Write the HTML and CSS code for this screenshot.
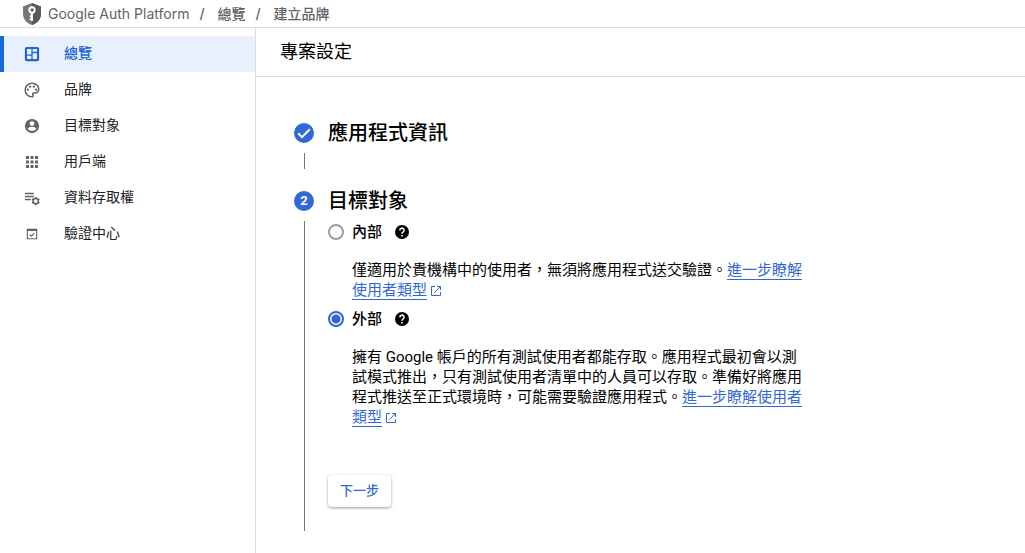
FILE: index.html
```html
<!DOCTYPE html>
<html lang="zh-Hant">
<head>
<meta charset="utf-8">
<meta name="viewport" content="width=device-width, initial-scale=1">
<title>專案設定</title>
<link rel="stylesheet" href="styles.css">
</head>
<body>
<header class="topbar">
  <svg class="shield" viewBox="0 0 20 24" aria-hidden="true">
    <path fill="#757575" d="M10 1 1 4.500v7C1 17 4.800 21.500 10 23c5.200-1.500 9-6 9-11.500v-7z"/>
    <path fill="#5a5a5a" d="M10 1v22c5.200-1.500 9-6 9-11.500v-7z"/>
    <circle cx="10" cy="8" r="2.700" fill="none" stroke="#fff" stroke-width="1.900"/>
    <path d="M10 10.500V19M10 14.200H7.800M10 17.200H7.800" fill="none" stroke="#fff" stroke-width="1.900"/>
  </svg>
  <nav class="crumbs" aria-label="導覽路徑">
    <a class="crumb product" href="#platform">Google Auth Platform</a>
    <span class="sep">/</span>
    <a class="crumb" href="#overview">總覽</a>
    <span class="sep">/</span>
    <a class="crumb" href="#brand">建立品牌</a>
  </nav>
</header>
<div class="shell">
  <nav class="sidebar" aria-label="主選單">
    <a class="nav-item active" href="#overview">
      <svg class="nav-icon" viewBox="0 0 24 24" aria-hidden="true"><path fill-rule="evenodd" d="M5 2.500h14A2.500 2.500 0 0 1 21.500 5v14a2.500 2.500 0 0 1-2.500 2.500H5A2.500 2.500 0 0 1 2.500 19V5A2.500 2.500 0 0 1 5 2.500zM5.300 5.300v13.400h13.400V5.300z"/><path fill="none" stroke="currentColor" stroke-width="1.700" d="M12 5v14M5 13.500h7M12 10h7"/></svg>
      <span class="nav-text">總覽</span></a>
    <a class="nav-item" href="#branding">
      <svg class="nav-icon" viewBox="0 0 24 24" aria-hidden="true"><path d="M12 22C6.490 22 2 17.510 2 12S6.490 2 12 2s10 4.040 10 9c0 3.310-2.690 6-6 6h-1.770c-.28 0-.5.220-.5.500 0 .120.050.230.130.330.410.470.640 1.060.640 1.670A2.500 2.500 0 0 1 12 22zm0-18c-4.410 0-8 3.590-8 8s3.590 8 8 8c.28 0 .5-.22.5-.5a.54.54 0 0 0-.14-.35c-.41-.46-.63-1.050-.63-1.650a2.500 2.500 0 0 1 2.500-2.500H16c2.210 0 4-1.790 4-4 0-3.860-3.590-7-8-7z"/><circle cx="6.500" cy="11.500" r="1.500"/><circle cx="9.500" cy="7.500" r="1.500"/><circle cx="14.500" cy="7.500" r="1.500"/><circle cx="17.500" cy="11.500" r="1.500"/></svg>
      <span class="nav-text">品牌</span></a>
    <a class="nav-item" href="#audience">
      <svg class="nav-icon" viewBox="0 0 24 24" aria-hidden="true"><path d="M12 2.500a9.500 9.500 0 1 0 0 19 9.500 9.500 0 0 0 0-19zm0 3a3.200 3.200 0 1 1 0 6.400 3.200 3.200 0 0 1 0-6.400zm0 13.300a6.800 6.800 0 0 1-5.700-3c0-1.900 3.800-2.900 5.700-2.900s5.700 1 5.700 2.900a6.800 6.800 0 0 1-5.700 3z"/></svg>
      <span class="nav-text">目標對象</span></a>
    <a class="nav-item" href="#clients">
      <svg class="nav-icon" viewBox="0 0 24 24" aria-hidden="true"><path d="M4 4h4v4H4zM10 4h4v4h-4zM16 4h4v4h-4zM4 10h4v4H4zM10 10h4v4h-4zM16 10h4v4h-4zM4 16h4v4H4zM10 16h4v4h-4zM16 16h4v4h-4z"/></svg>
      <span class="nav-text">用戶端</span></a>
    <a class="nav-item" href="#data">
      <svg class="nav-icon" viewBox="0 0 24 24" aria-hidden="true"><path d="M2.500 5h12v2h-12zM2.500 9h12v2h-12zM2.500 13h8v2h-8z"/><circle cx="17" cy="16" r="3.500" fill="none" stroke="currentColor" stroke-width="2"/><path d="M15.800 10.500h2.400v2h-2.400zM15.800 19.500h2.400v2h-2.400zM11.600 14.300l1.200-2.100 1.800 1-1.200 2.100zM19.400 18.800l1.200-2.100 1.800 1-1.200 2.100zM11.600 17.700l1.800-1 1.200 2.100-1.800 1zM19.400 13.200l1.800-1 1.200 2.100-1.800 1z"/></svg>
      <span class="nav-text">資料存取權</span></a>
    <a class="nav-item" href="#verification">
      <svg class="nav-icon" viewBox="0 0 24 24" aria-hidden="true"><path fill-rule="evenodd" d="M6 5h12a1 1 0 0 1 1 1v12a1 1 0 0 1-1 1H6a1 1 0 0 1-1-1V6a1 1 0 0 1 1-1zM6.500 8v9.500h11V8z"/><path d="m9 12.700 2.200 2.100 4-4" fill="none" stroke="currentColor" stroke-width="1.500"/></svg>
      <span class="nav-text">驗證中心</span></a>
  </nav>
  <main class="main">
    <h1 class="page-title">專案設定</h1>
    <ol class="steps">
      <li class="step">
        <div class="rail">
          <svg class="badge" viewBox="0 0 20 20" aria-hidden="true"><circle cx="10" cy="10" r="10" fill="#3367d6"/><path d="m4.200 10.300 3.800 3.800 7.800-7.800" fill="none" stroke="#fff" stroke-width="2"/></svg>
          <span class="line"></span>
        </div>
        <h2 class="step-title">應用程式資訊</h2>
      </li>
      <li class="step">
        <div class="rail">
          <span class="badge number">2</span>
          <span class="line"></span>
        </div>
        <form class="step-body">
          <h2 class="step-title">目標對象</h2>
          <div class="option">
            <input class="radio" type="radio" name="audience" id="internal">
            <label class="option-label" for="internal">內部</label>
            <button class="help" type="button" aria-label="說明"><svg class="help-icon" viewBox="0 0 14 14" aria-hidden="true"><circle cx="7" cy="7" r="7"/><path d="M4.900 5.500A2.100 2.100 0 1 1 8 7.100C7.300 7.600 7 7.900 7 8.700" fill="none" stroke="#fff" stroke-width="1.500"/><path fill="#fff" d="M6.200 9.900h1.600v1.500H6.200z"/></svg></button>
          </div>
          <p class="description">僅適用於貴機構中的使用者，無須將應用程式送交驗證。<a class="link" href="#user-type">進一步瞭解使用者類型</a><svg class="external" viewBox="0 0 12 12" aria-hidden="true"><path d="M5 1.500H1.500v9h9V7M7 1.500h3.500V5M10.500 1.500 4.500 7.500"/></svg></p>
          <div class="option">
            <input class="radio" type="radio" name="audience" id="external" checked>
            <label class="option-label" for="external">外部</label>
            <button class="help" type="button" aria-label="說明"><svg class="help-icon" viewBox="0 0 14 14" aria-hidden="true"><circle cx="7" cy="7" r="7"/><path d="M4.900 5.500A2.100 2.100 0 1 1 8 7.100C7.300 7.600 7 7.900 7 8.700" fill="none" stroke="#fff" stroke-width="1.500"/><path fill="#fff" d="M6.200 9.900h1.600v1.500H6.200z"/></svg></button>
          </div>
          <p class="description">擁有 Google 帳戶的所有測試使用者都能存取。應用程式最初會以測試模式推出，只有測試使用者清單中的人員可以存取。準備好將應用程式推送至正式環境時，可能需要驗證應用程式。<a class="link" href="#user-type">進一步瞭解使用者類型</a><svg class="external" viewBox="0 0 12 12" aria-hidden="true"><path d="M5 1.500H1.500v9h9V7M7 1.500h3.500V5M10.500 1.500 4.500 7.500"/></svg></p>
          <button class="next" type="button">下一步</button>
        </form>
      </li>
    </ol>
  </main>
</div>
</body>
</html>
```
FILE: styles.css
```css
* {
  box-sizing: border-box;
}

body {
  margin: 0;
  min-height: 100vh;
  display: flex;
  flex-direction: column;
  background: #fff;
  color: #000;
  font: 15px/20px Roboto, "Noto Sans CJK TC", sans-serif;
}

a {
  color: inherit;
  text-decoration: none;
}

.topbar {
  display: flex;
  align-items: center;
  gap: 6px;
  height: 28px;
  padding-left: 22px;
  border-bottom: 1px solid #dadce0;
}

.shield {
  width: 20px;
  height: 24px;
}

.crumbs {
  display: flex;
  gap: 10px;
  color: #5f6368;
  font-family: Inter, "Noto Sans CJK TC", sans-serif;
  font-size: 14px;
  font-weight: 500;
}

.product {
  font-weight: 400;
}

.sep {
  width: 8px;
}

.shell {
  flex: 1;
  display: flex;
}

.sidebar {
  flex: 0 0 256px;
  padding-top: 8px;
  border-right: 1px solid #dadce0;
}

.nav-item {
  display: flex;
  align-items: center;
  gap: 23px;
  height: 36px;
  padding-left: 19px;
  border-left: 4px solid transparent;
  color: #202124;
  font-size: 14px;
}

.nav-item.active {
  border-left-color: #1967d2;
  background: #e8f0fe;
  color: #1967d2;
  font-weight: 500;
}

.nav-text {
  padding-bottom: 2px;
}

.nav-icon {
  width: 18px;
  height: 18px;
  color: #5f6368;
  fill: currentColor;
}

.active .nav-icon {
  color: #1967d2;
}

.main {
  flex: 1;
  min-width: 0;
}

.page-title {
  margin: 0;
  padding: 12px 24px;
  border-bottom: 1px solid #dadce0;
  font-size: 18px;
  line-height: 24px;
  font-weight: 400;
}

.steps {
  margin: 0;
  padding: 46px 38px 22px;
  list-style: none;
}

.step {
  display: flex;
  gap: 14px;
  min-height: 68px;
}

.rail {
  flex: 0 0 20px;
  display: flex;
  flex-direction: column;
  align-items: center;
  gap: 10px;
}

.step:first-child .rail {
  padding-bottom: 22px;
}

.badge {
  width: 20px;
  height: 20px;
}

.number {
  border-radius: 50%;
  background: #3367d6;
  color: #fff;
  font-size: 13px;
  font-weight: 700;
  text-align: center;
}

.line {
  flex: 1;
  width: 1px;
  background: #757575;
}

.step-title {
  margin: 0;
  font-size: 20px;
  line-height: 20px;
  font-weight: 500;
}

.step-body {
  padding-bottom: 24px;
}

.step-body .step-title {
  margin-bottom: 9px;
}

.option {
  display: flex;
  align-items: center;
  height: 24px;
}

.radio {
  appearance: none;
  width: 16px;
  height: 16px;
  margin: 0 8px 0 0;
  border: 2px solid #9e9e9e;
  border-radius: 50%;
}

.radio:checked {
  border-color: #3367d6;
  background: radial-gradient(circle, #3367d6 4px, transparent 5px);
}

.option-label {
  font-weight: 500;
}

.help {
  display: flex;
  margin-left: 13px;
  padding: 0;
  border: 0;
  background: none;
}

.help-icon {
  width: 14px;
  height: 14px;
}

.description {
  max-width: 476px;
  margin: 0;
  padding: 16px 0 7px 24px;
}

.link {
  border-bottom: 1px solid #3367d6;
  color: #3367d6;
}

.external {
  width: 12px;
  height: 12px;
  margin-left: 3px;
  vertical-align: -2px;
  fill: none;
  stroke: #3367d6;
}

.next {
  display: block;
  margin-top: 41px;
  padding: 6px 12px;
  border: 0;
  border-radius: 4px;
  background: #fff;
  box-shadow: 0 1px 3px rgba(0, 0, 0, 0.4);
  color: #3367d6;
  font: 500 13px/20px Roboto, "Noto Sans CJK TC", sans-serif;
}
```
